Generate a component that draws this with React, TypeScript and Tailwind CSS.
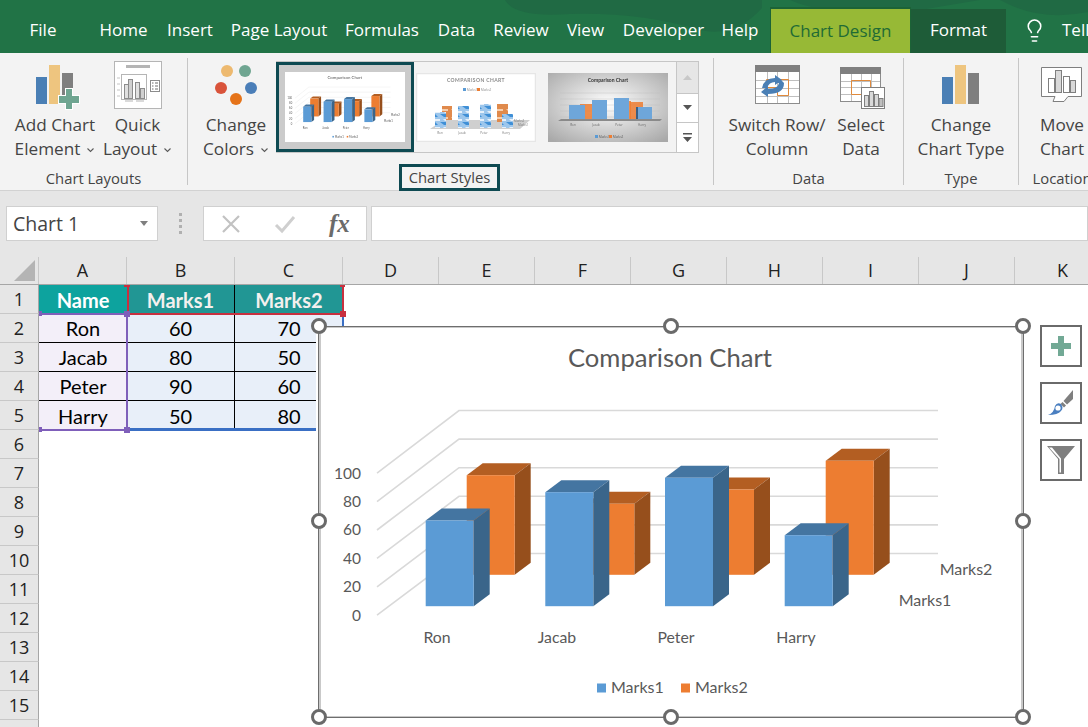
import React from "react";
import { Lightbulb } from "lucide-react";

const BLUE = { front: "#5b9bd5", top: "#4475a1", side: "#3a658a" };
const ORANGE = { front: "#ed7d31", top: "#b35e22", side: "#964f1c" };

function Bar({ x, top, bottom, c }: { x: number; top: number; bottom: number; c: typeof BLUE }) {
  const w = 48, dx = 16, dy = 12;
  return (
    <g>
      <polygon points={`${x},${top} ${x + dx},${top - dy} ${x + w + dx},${top - dy} ${x + w},${top}`} fill={c.top} />
      <polygon points={`${x + w},${top} ${x + w + dx},${top - dy} ${x + w + dx},${bottom - dy} ${x + w},${bottom}`} fill={c.side} />
      <rect x={x} y={top} width={w} height={bottom - top} fill={c.front} />
    </g>
  );
}

function Chart3D() {
  const ys = [0, 1, 2, 3, 4, 5];
  return (
    <g fontFamily="Lato, sans-serif" fill="#595959">
      <text x="670" y="366" fontSize="25.6" textAnchor="middle" fontFamily="Lato, sans-serif">Comparison Chart</text>
      {ys.map((i) => {
        const by = 410 + i * 28.6;
        const fy = 472.7 + i * 28.4;
        return (
          <g key={i} stroke="#d9d9d9" strokeWidth="1.6" fill="none">
            <polyline points={`377,${fy} 459,${by} 938,${by}`} />
          </g>
        );
      })}
      {["100", "80", "60", "40", "20", "0"].map((t, i) => (
        <text key={t} x="361" y={478 + i * 28.4} fontSize="15.5" textAnchor="end">{t}</text>
      ))}
      <Bar x={466.7} top={474.7} bottom={574.3} c={ORANGE} />
      <Bar x={586.3} top={503.3} bottom={574.3} c={ORANGE} />
      <Bar x={706} top={489} bottom={574.3} c={ORANGE} />
      <Bar x={825.7} top={460.3} bottom={574.3} c={ORANGE} />
      <Bar x={425.7} top={520} bottom={605.7} c={BLUE} />
      <Bar x={545.3} top={491.7} bottom={605.7} c={BLUE} />
      <Bar x={665} top={477.3} bottom={605.7} c={BLUE} />
      <Bar x={784.7} top={534.7} bottom={605.7} c={BLUE} />
      <text x="966" y="574" fontSize="16" textAnchor="middle">Marks2</text>
      <text x="925" y="605" fontSize="16" textAnchor="middle">Marks1</text>
      <text x="437" y="642" fontSize="15.8" textAnchor="middle">Ron</text>
      <text x="557" y="642" fontSize="15.8" textAnchor="middle">Jacab</text>
      <text x="676" y="642" fontSize="15.8" textAnchor="middle">Peter</text>
      <text x="796" y="642" fontSize="15.8" textAnchor="middle">Harry</text>
      <rect x="597" y="683" width="9" height="9" fill="#5b9bd5" />
      <text x="611" y="692" fontSize="16">Marks1</text>
      <rect x="681" y="683" width="9" height="9" fill="#ed7d31" />
      <text x="695" y="692" fontSize="16">Marks2</text>
    </g>
  );
}

function Thumb2() {
  const cols = [
    [435, 110],
    [458, 104],
    [480, 102],
    [502, 112],
  ];
  return (
    <svg viewBox="416 71 120 69" className="w-[120px] h-[69px] blur-[0.3px]">
      <defs>
        <pattern id="ice" width="11" height="8" patternUnits="userSpaceOnUse">
          <rect width="11" height="8" fill="#9cc6ec" />
          <path d="M0 0H6L9 3H4Z" fill="#3f8fd6" />
          <path d="M3 5H11V7H5Z" fill="#e6f0fa" />
        </pattern>
        <pattern id="ice2" width="11" height="8" patternUnits="userSpaceOnUse">
          <rect width="11" height="8" fill="#e08a4c" />
          <path d="M0 3H8V5H2Z" fill="#f7cfae" />
        </pattern>
      </defs>
      <rect x="416.5" y="71.5" width="119" height="68" fill="#fff" stroke="#e6e6e6" strokeWidth="1.5" />
      <text x="476" y="80" fontSize="5" textAnchor="middle" fill="#8a8a8a" fontFamily="Lato, sans-serif" fontWeight="700" letterSpacing="0.4">COMPARISON CHART</text>
      <rect x="463" y="86" width="3" height="3" fill="#5b9bd5" />
      <text x="467" y="89" fontSize="3" fill="#888">Marks1</text>
      <rect x="477" y="86" width="3" height="3" fill="#ed7d31" />
      <text x="481" y="89" fontSize="3" fill="#888">Marks2</text>
      <polygon points="430,127 443,118 530,118 520,127" fill="#cfcfcf" />
      <rect x="442" y="104" width="10" height="14" fill="url(#ice2)" />
      <rect x="497" y="102" width="11" height="18" fill="url(#ice2)" />
      {cols.map((c) => (
        <rect key={c[0]} x={c[0]} y={c[1]} width={11} height={126 - c[1]} fill="url(#ice)" />
      ))}
      <text x="514" y="120" fontSize="3" fill="#777">Marks2</text>
      <text x="518" y="124" fontSize="3" fill="#777">Marks1</text>
      {["Ron", "Jacab", "Peter", "Harry"].map((t, i) => (
        <text key={t} x={440 + i * 22} y="132" fontSize="3" textAnchor="middle" fill="#777">{t}</text>
      ))}
    </svg>
  );
}

function Thumb3() {
  return (
    <svg viewBox="548 71 120 69" className="w-[120px] h-[69px] blur-[0.3px]">
      <defs>
        <radialGradient id="bg3" cx="50%" cy="45%" r="70%">
          <stop offset="0%" stopColor="#ffffff" />
          <stop offset="100%" stopColor="#a9a9a9" />
        </radialGradient>
      </defs>
      <rect x="548" y="71" width="120" height="69" fill="url(#bg3)" />
      <text x="608" y="80" fontSize="5" textAnchor="middle" fill="#333" fontFamily="Lato, sans-serif" fontWeight="700">Comparison Chart</text>
      {[91, 97, 103, 109, 115].map((y) => (
        <line key={y} x1="560" x2="660" y1={y} y2={y} stroke="#bdbdbd" strokeWidth="0.4" />
      ))}
      <polygon points="558,119 561,117 662,117 660,119" fill="#8a8a8a" />
      <rect x="580" y="102" width="13" height="15" fill="#ed7d31" opacity="0.85" />
      <rect x="617" y="99" width="14" height="18" fill="#ed7d31" opacity="0.85" />
      <rect x="630" y="100" width="13" height="17" fill="#ed7d31" opacity="0.85" />
      <rect x="569" y="103" width="16" height="14" fill="#6ea6da" />
      <rect x="592" y="98" width="15" height="19" fill="#6ea6da" />
      <rect x="614" y="96" width="15" height="21" fill="#6ea6da" />
      <rect x="637" y="105" width="15" height="12" fill="#6ea6da" />
      <rect x="636" y="105" width="2" height="12" fill="#3a5f82" />
      <rect x="595" y="133" width="3" height="3" fill="#5b9bd5" />
      <text x="599" y="136" fontSize="3" fill="#555">Marks1</text>
      <rect x="609" y="133" width="3" height="3" fill="#ed7d31" />
      <text x="613" y="136" fontSize="3" fill="#555">Marks2</text>
      {["Ron", "Jacab", "Peter", "Harry"].map((t, i) => (
        <text key={t} x={573 + i * 23} y="124" fontSize="3" textAnchor="middle" fill="#666">{t}</text>
      ))}
    </svg>
  );
}

function Caret() {
  return (
    <svg width="9" height="6" viewBox="0 0 9 6" className="ml-[6px] inline-block align-middle">
      <path d="M1.5 1.5 L4.5 4.5 L7.5 1.5" stroke="#595959" strokeWidth="1.1" fill="none" />
    </svg>
  );
}

function RibbonButton({ icon, l1, l2, caret, w }: { icon: React.ReactNode; l1: string; l2: string; caret?: boolean; w: string }) {
  return (
    <div className={`flex flex-col items-center shrink-0 ${w}`}>
      <div className="h-[60px] flex justify-center">{icon}</div>
      <div className="leading-[24px] text-center whitespace-nowrap">{l1}</div>
      <div className="leading-[24px] text-center whitespace-nowrap">
        {l2}
        {caret && <Caret />}
      </div>
    </div>
  );
}

const IconAdd = (
  <svg viewBox="25 53 60 60" className="w-[60px] h-[60px]">
    <rect x="36" y="77" width="11" height="27" fill="#4a7fb5" />
    <rect x="49" y="65" width="11" height="39" fill="#eec57f" />
    <rect x="62" y="73" width="11" height="24" fill="#7f7f7f" />
    <path d="M65 88 H73 V95 H80 V104 H73 V110 H65 V104 H58 V95 H65Z" fill="#fff" />
    <path d="M66 89 H72 V96 H79 V103 H72 V109 H66 V103 H59 V96 H66Z" fill="#6fa591" />
  </svg>
);

const IconQuick = (
  <svg viewBox="107 53 60 60" className="w-[60px] h-[60px]">
    <rect x="113.5" y="61.5" width="47" height="47" fill="#fff" stroke="#b5b5b5" />
    <rect x="125" y="65" width="24" height="3" fill="#b5b5b5" />
    <rect x="120.5" y="74.5" width="25" height="25" fill="#fff" stroke="#b5b5b5" />
    <path d="M116 78h3M116 84h3M116 90h3M116 96h3" stroke="#c4c4c4" />
    <rect x="123.5" y="84.5" width="4" height="14" fill="#e0e0e0" stroke="#8c8c8c" />
    <rect x="127.5" y="79.5" width="4" height="19" fill="#d0d0d0" stroke="#8c8c8c" />
    <rect x="134.5" y="82.5" width="4" height="16" fill="#e0e0e0" stroke="#8c8c8c" />
    <rect x="139.5" y="88.5" width="4" height="10" fill="#d0d0d0" stroke="#8c8c8c" />
    <path d="M124 101h8M135 101h8" stroke="#b5b5b5" />
    <rect x="149.5" y="80.5" width="9" height="11" fill="#fff" stroke="#8c8c8c" />
    <path d="M151 83h1.5M151 86h1.5M151 89h1.5M154 83h3M154 86h3M154 89h3" stroke="#6b6b6b" />
  </svg>
);

const IconColors = (
  <svg viewBox="207 53 60 60" className="w-[60px] h-[60px]">
    <circle cx="228" cy="71" r="6" fill="#edb96f" />
    <circle cx="246" cy="71" r="6" fill="#6fa591" />
    <circle cx="222" cy="88" r="6" fill="#d9533a" />
    <circle cx="252" cy="88" r="6" fill="#4a7eb8" />
    <circle cx="237" cy="99" r="6" fill="#e57319" />
  </svg>
);

const IconSwitch = (
  <svg viewBox="747 53 60 60" className="w-[60px] h-[60px]">
    <rect x="755.5" y="65.5" width="44" height="38" fill="#fff" stroke="#8c8c8c" />
    <rect x="755" y="65" width="45" height="7" fill="#7f7f7f" />
    <path d="M767.5 72v31M777.5 72v31M788.5 72v31M756 80.5h43M756 88.5h43M756 96.5h43" stroke="#bfbfbf" />
    <path d="M766.5 95.5V79.5H788.5V95.5H777.5V87.5H766.5" fill="none" stroke="#e08a3c" />
    <path d="M762 88 Q764 78 775 78 L775 75 L782 80 L775 85 L775 82 Q769 82 767 88Z" fill="#4a7fb5" />
    <path d="M768 89 Q778 89 779 83 L775 83 L780 79 L784 83 Q784 94 768 94 L768 97 L761 92 L768 86Z" fill="#4a7fb5" />
  </svg>
);

const IconSelect = (
  <svg viewBox="831 53 60 60" className="w-[60px] h-[60px]">
    <rect x="840.5" y="67.5" width="40" height="34" fill="#fff" stroke="#8c8c8c" />
    <rect x="840" y="67" width="41" height="7" fill="#7f7f7f" />
    <path d="M851.5 74v27M861.5 74v27M871.5 74v27M841 81.5h39M841 87.5h39M841 94.5h39" stroke="#bfbfbf" />
    <path d="M851.5 94.5V80.5H870.5V94.5H851.5" fill="none" stroke="#e08a3c" />
    <rect x="861.5" y="87.5" width="23" height="21" fill="#fff" stroke="#7f7f7f" />
    <rect x="864.5" y="95.5" width="4" height="11" fill="#d9d9d9" stroke="#7f7f7f" />
    <rect x="869.5" y="91.5" width="4" height="15" fill="#d9d9d9" stroke="#7f7f7f" />
    <rect x="874.5" y="94.5" width="4" height="12" fill="#d9d9d9" stroke="#7f7f7f" />
    <rect x="879" y="98.5" width="4" height="8" fill="#bfbfbf" stroke="#7f7f7f" />
  </svg>
);

const IconType = (
  <svg viewBox="931 53 60 60" className="w-[60px] h-[60px]">
    <rect x="942" y="77" width="11" height="27" fill="#4a7fb5" />
    <rect x="955" y="65" width="11" height="39" fill="#eec57f" />
    <rect x="968" y="73" width="11" height="31" fill="#7f7f7f" />
  </svg>
);

const IconMove = (
  <svg viewBox="1032 53 60 60" className="w-[60px] h-[60px]">
    <path d="M1041.5 67.5H1081.5V96.5H1068L1064 101.5H1053L1055 96.5H1041.5Z" fill="#fff" stroke="#7f7f7f" />
    <rect x="1048.5" y="78.5" width="6" height="14" fill="#fff" stroke="#7f7f7f" />
    <rect x="1055.5" y="70.5" width="6" height="22" fill="#d9d9d9" stroke="#7f7f7f" />
    <rect x="1063.5" y="76.5" width="6" height="16" fill="#fff" stroke="#7f7f7f" />
    <rect x="1070.5" y="80.5" width="5" height="12" fill="#d9d9d9" stroke="#7f7f7f" />
  </svg>
);

const Sep = () => <div className="w-[1px] shrink-0 my-[5px] bg-[#c6c6c6]" />;

function Ribbon() {
  return (
    <div className="flex h-[138px] bg-[#f3f3f3] border-b border-[#d2d2d2] text-[17.2px] text-[#444444]">
      {/* Chart Layouts */}
      <div className="w-[187px] shrink-0 flex flex-col">
        <div className="h-[115px] flex pl-[10px]">
          <RibbonButton w="w-[90px]" icon={IconAdd} l1="Add Chart" l2="Element" caret />
          <RibbonButton w="w-[75px]" icon={IconQuick} l1="Quick" l2="Layout" caret />
        </div>
        <div className="text-[14.8px] leading-[20px] text-center">Chart Layouts</div>
      </div>
      <Sep />
      {/* Chart Styles */}
      <div className="w-[525px] shrink-0 flex flex-col items-center">
        <div className="h-[115px] w-full flex pl-[8px]">
          <RibbonButton w="w-[80px]" icon={IconColors} l1="Change" l2="Colors" caret />
          <div className="mt-[8px] h-[92px] w-[423px] border border-[#c6c6c6] bg-white flex">
            <div className="w-[138px] h-[90px] shrink-0 -ml-[1px] border-[3px] border-[#0e4a52] bg-[#cbcbcb] flex items-center justify-center">
              <div className="w-[120px] h-[70px] bg-white">
                <svg viewBox="319 326 704 391" preserveAspectRatio="none" className="w-[120px] h-[70px] blur-[0.3px]">
                  <Chart3D />
                </svg>
              </div>
            </div>
            <div className="flex-1 flex items-center pl-[2px] gap-[12px] bg-[#f3f3f3]">
              <Thumb2 />
              <Thumb3 />
            </div>
            <div className="w-[22px] shrink-0 flex flex-col border-l border-[#c6c6c6]">
              <div className="h-[32px] bg-[#e6e6e6] border-b border-[#c6c6c6] flex items-center justify-center">
                <svg width="9" height="6" viewBox="0 0 9 6"><path d="M4.5 0 L9 5 H0Z" fill="#c8c8c8" /></svg>
              </div>
              <div className="h-[29px] border-b border-[#c6c6c6] flex items-center justify-center">
                <svg width="9" height="6" viewBox="0 0 9 6"><path d="M4.5 5 L9 0 H0Z" fill="#555555" /></svg>
              </div>
              <div className="flex-1 flex items-center justify-center">
                <svg width="9" height="9" viewBox="0 0 9 9"><path d="M0 0H9V1.5H0Z M4.5 9 L9 4 H0Z" fill="#555555" /></svg>
              </div>
            </div>
          </div>
        </div>
        <div className="-mt-[4px] mr-[2px] translate-y-[1px] h-[27px] w-[101px] border-[3px] border-[#0e4a52] text-[14.8px] leading-[21px] text-center whitespace-nowrap">Chart Styles</div>
      </div>
      <Sep />
      {/* Data */}
      <div className="w-[189px] shrink-0 flex flex-col">
        <div className="h-[115px] flex pl-[11px]">
          <RibbonButton w="w-[104px]" icon={IconSwitch} l1="Switch Row/" l2="Column" />
          <RibbonButton w="w-[64px]" icon={IconSelect} l1="Select" l2="Data" />
        </div>
        <div className="text-[14.8px] leading-[20px] text-center">Data</div>
      </div>
      <Sep />
      {/* Type */}
      <div className="w-[114px] shrink-0 flex flex-col">
        <div className="h-[115px] flex">
          <RibbonButton w="w-[114px]" icon={IconType} l1="Change" l2="Chart Type" />
        </div>
        <div className="text-[14.8px] leading-[20px] text-center">Type</div>
      </div>
      <Sep />
      {/* Location */}
      <div className="w-[86px] shrink-0 flex flex-col">
        <div className="h-[115px] flex">
          <RibbonButton w="w-[86px]" icon={IconMove} l1="Move" l2="Chart" />
        </div>
        <div className="text-[14.8px] leading-[20px] text-center">Location</div>
      </div>
    </div>
  );
}

function TitleBar() {
  const tabs: [string, string][] = [
    ["File", "w-[86px]"],
    ["Home", "w-[75px]"],
    ["Insert", "w-[58px]"],
    ["Page Layout", "w-[120px]"],
    ["Formulas", "w-[86px]"],
    ["Data", "w-[63px]"],
    ["Review", "w-[66px]"],
    ["View", "w-[63px]"],
    ["Developer", "w-[93px]"],
    ["Help", "w-[60px]"],
  ];
  return (
    <div className="relative flex h-[53px] bg-[#217346] text-white text-[17px] overflow-hidden">
      <svg className="absolute left-0 top-0 w-[1088px] h-[53px]" viewBox="0 0 1088 53">
        <path d="M505 0 Q515 18 570 14 Q640 12 700 30 Q735 38 762 8 L762 0Z" fill="#206a44" />
        <path d="M790 0 Q830 18 920 10 L980 0Z" fill="#206a44" />
        <path d="M1000 0 Q1040 22 1088 12 V0Z" fill="#206a44" />
      </svg>
      {tabs.map(([t, w]) => (
        <div key={t} className={`relative ${w} shrink-0 pt-[7px] flex items-center justify-center whitespace-nowrap`}>{t}</div>
      ))}
      <div className="relative mt-[7px] w-[141px] shrink-0 bg-[#97b936] border-t-2 border-x border-[#1c6336] border-b-0 flex items-center justify-center text-[#1f6b35]">Chart Design</div>
      <div className="relative mt-[9px] w-[95px] shrink-0 bg-[#1e5c38] pb-[2px] flex items-center justify-center">Format</div>
      <div className="relative w-[56px] shrink-0 pt-[7px] flex items-center justify-center">
        <Lightbulb size={25} strokeWidth={1.5} />
      </div>
      <div className="relative pt-[7px] flex items-center whitespace-nowrap">Tell</div>
    </div>
  );
}

function FormulaBar() {
  return (
    <div className="flex h-[66px] pt-[15px] bg-[#e6e6e6]">
      <div className="ml-[6px] w-[152px] h-[35px] shrink-0 bg-white border border-[#d0d0d0] flex items-center justify-between pl-[6px] pr-[9px] text-[19.5px] text-[#444444]">
        <span>Chart 1</span>
        <svg width="8" height="5" viewBox="0 0 8 5"><path d="M0 0H8L4 5Z" fill="#7f7f7f" /></svg>
      </div>
      <div className="w-[45px] h-[35px] shrink-0 flex flex-col items-center justify-center gap-[3px]">
        <div className="w-[3px] h-[3px] bg-[#b0b0b0]" />
        <div className="w-[3px] h-[3px] bg-[#b0b0b0]" />
        <div className="w-[3px] h-[3px] bg-[#b0b0b0]" />
        <div className="w-[3px] h-[3px] bg-[#b0b0b0]" />
      </div>
      <div className="w-[164px] h-[35px] shrink-0 bg-white border border-[#d0d0d0] flex items-center">
        <svg width="20" height="20" viewBox="0 0 20 20" className="ml-[17px]"><path d="M2 2L18 18M18 2L2 18" stroke="#c2c2c2" strokeWidth="2.2" /></svg>
        <svg width="22" height="20" viewBox="0 0 22 20" className="ml-[33px]"><path d="M2 11L8 17L20 3" stroke="#cfcfcf" strokeWidth="3" fill="none" /></svg>
        <span className="ml-[33px] [font-family:'Liberation_Serif',serif] italic font-bold text-[25px] text-[#6b6b6b] leading-none">fx</span>
      </div>
      <div className="ml-[4px] flex-1 h-[35px] bg-white border border-[#d0d0d0]" />
    </div>
  );
}

const colW = ["w-[88px]", "w-[108px]", "w-[108px]", "w-[96px]", "w-[96px]", "w-[96px]", "w-[96px]", "w-[96px]", "w-[96px]", "w-[96px]", "w-[96px]"];
const colN = ["A", "B", "C", "D", "E", "F", "G", "H", "I", "J", "K"];
const data = [
  ["Ron", "60", "70"],
  ["Jacab", "80", "50"],
  ["Peter", "90", "60"],
  ["Harry", "50", "80"],
];

function Sheet() {
  const rows = Array.from({ length: 15 }, (_, i) => i + 1);
  return (
    <div className="relative bg-white flex-1 overflow-hidden [font-family:Lato,sans-serif]">
      <div className="flex h-[28px] bg-[#e6e6e6] border-b border-[#a6a6a6] text-[18px] text-[#222222] [font-family:'Open_Sans',sans-serif]">
        <div className="w-[39px] shrink-0 border-r border-[#c8c8c8] relative">
          <svg width="22" height="22" viewBox="0 0 22 22" className="absolute left-[14px] top-[3px]"><path d="M21 0V21H0Z" fill="#b4b4b4" /></svg>
        </div>
        {colN.map((c, i) => (
          <div key={c} className={`${colW[i]} shrink-0 border-r border-[#c8c8c8] flex items-center justify-center`}>{c}</div>
        ))}
      </div>
      {rows.map((r) => {
        const row = r >= 2 && r <= 5 ? data[r - 2] : null;
        return (
          <div key={r} className="flex h-[29px]">
            <div className="w-[39px] shrink-0 bg-[#e6e6e6] border-r border-b border-r-[#a6a6a6] border-b-[#c8c8c8] flex items-center justify-center text-[18px] text-[#222222] [font-family:'Open_Sans',sans-serif]">{r}</div>
            {r === 1 && (
              <>
                <div className="w-[88px] shrink-0 bg-[#0da39e] text-white font-bold text-[20px] flex items-center justify-center">Name</div>
                <div className="w-[108px] shrink-0 bg-[#219694] text-[#f4f0ee] font-bold text-[20px] flex items-center justify-center border-r border-black">Marks1</div>
                <div className="w-[108px] shrink-0 bg-[#219694] text-[#f4f0ee] font-bold text-[20px] flex items-center justify-center">Marks2</div>
              </>
            )}
            {row && (
              <>
                <div className={`w-[88px] shrink-0 bg-[#f3eff9] text-black text-[20px] flex items-center justify-center ${r < 5 ? "border-b border-black" : ""}`}>{row[0]}</div>
                <div className={`w-[108px] shrink-0 bg-[#e8eff9] text-black text-[20px] flex items-center justify-center border-r border-black ${r < 5 ? "border-b border-b-black" : ""}`}>{row[1]}</div>
                <div className={`w-[108px] shrink-0 bg-[#e8eff9] text-black text-[20px] flex items-center justify-center ${r < 5 ? "border-b border-black" : ""}`}>{row[2]}</div>
              </>
            )}
          </div>
        );
      })}
      <div className="h-[29px] w-[39px] bg-[#e6e6e6] border-r border-[#a6a6a6]" />

      {/* range highlights */}
      <div className="absolute left-[127px] top-[28px] w-[217px] h-[30px] border-x-2 border-b-2 border-[#c8303f]" />
      <div className="absolute left-[39px] top-[56px] w-[89px] h-[118px] border-y-[2px] border-r-2 border-[#7f5fba]" />
      <div className="absolute left-[128px] top-[171px] w-[190px] h-[3px] bg-[#3a6fc4]" />
      <div className="absolute left-[342px] top-[58px] w-[2px] h-[12px] bg-[#3a6fc4]" />
      <div className="absolute left-[124px] top-[54px] w-[6px] h-[6px] bg-[#7f5fba]" />
      <div className="absolute left-[124px] top-[170px] w-[6px] h-[6px] bg-[#7f5fba]" />
      <div className="absolute left-[39px] top-[54px] w-[3px] h-[5px] bg-[#7f5fba]" />
      <div className="absolute left-[39px] top-[170px] w-[3px] h-[5px] bg-[#7f5fba]" />
      <div className="absolute left-[340px] top-[54px] w-[6px] h-[6px] bg-[#c8303f]" />
      <div className="absolute left-[124px] top-[28px] w-[6px] h-[2px] bg-[#c8303f]" />
      <div className="absolute left-[340px] top-[28px] w-[5px] h-[2px] bg-[#c8303f]" />

      {/* chart object */}
      <div className="absolute left-[316px] top-[69px] w-[3px] h-[140px] bg-white" />
      <div className="absolute left-[318px] top-[69px] w-[706px] h-[392px] bg-white border-x-[3px] border-y-2 border-[#c9c9c9] outline outline-1 -outline-offset-1 outline-[#6e6e6e]">
        <svg viewBox="321 328 700 387" className="w-[700px] h-[388px]">
          <Chart3D />
        </svg>
      </div>
      {[
        "left-[311px] top-[61px]",
        "left-[663px] top-[61px]",
        "left-[1015px] top-[61px]",
        "left-[311px] top-[256px]",
        "left-[1015px] top-[256px]",
        "left-[311px] top-[452px]",
        "left-[663px] top-[452px]",
        "left-[1015px] top-[452px]",
      ].map((p) => (
        <div key={p} className={`absolute ${p} w-[16px] h-[16px] rounded-full bg-white border-[3px] border-[#6a6a6a]`} />
      ))}

      {/* chart tool buttons */}
      <div className="absolute left-[1040px] top-[68px] flex flex-col gap-[15px]">
        <div className="w-[42px] h-[42px] bg-white border-2 border-[#6a6a6a] flex items-center justify-center">
          <svg width="20" height="20" viewBox="0 0 20 20"><path d="M7 0H13V7H20V13H13V20H7V13H0V7H7Z" fill="#72a995" /></svg>
        </div>
        <div className="w-[42px] h-[42px] bg-white border-2 border-[#6a6a6a] flex items-center justify-center">
          <svg width="26" height="26" viewBox="0 0 26 26">
            <path d="M25 0V9L19 14.5L15.5 11Z" fill="#7f7f7f" />
            <path d="M14.5 12L18 15.5L16 17.5L12.5 14Z" fill="#7f7f7f" />
            <path d="M0 25 Q6 23 7 16 Q9 12 13 14 Q16 18 13 21 Q10 25 0 25Z" fill="#4a7fc0" />
            <circle cx="10" cy="18" r="2.6" fill="#fff" />
          </svg>
        </div>
        <div className="w-[42px] h-[42px] bg-white border-2 border-[#6a6a6a] flex items-center justify-center">
          <svg width="30" height="28" viewBox="0 0 30 28">
            <path d="M1 0H29L18 13V28H12V13Z" fill="#7f7f7f" />
            <path d="M3 1.5L13.5 13V26.5H15V12.5L6 1.5Z" fill="#fff" />
          </svg>
        </div>
      </div>
    </div>
  );
}

export default function App() {
  return (
    <div className="w-[1088px] h-[727px] overflow-hidden flex flex-col [font-family:'Open_Sans',sans-serif]">
      <TitleBar />
      <Ribbon />
      <FormulaBar />
      <Sheet />
    </div>
  );
}
